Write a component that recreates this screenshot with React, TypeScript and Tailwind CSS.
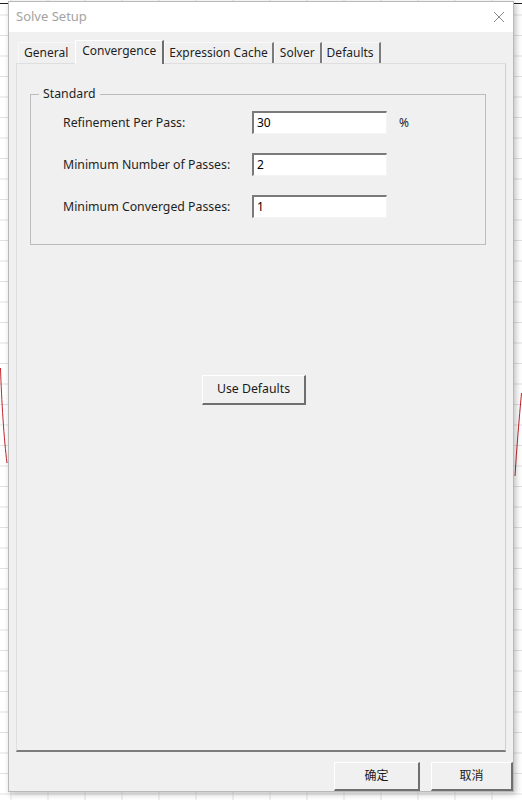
import React from 'react';

const tabs = [
  { name: 'General', pad: 'pl-[5px] pr-[7px]' },
  { name: 'Convergence', pad: 'px-[6px]' },
  { name: 'Expression Cache', pad: 'px-[4px]' },
  { name: 'Solver', pad: 'px-[5px]' },
  { name: 'Defaults', pad: 'pl-[4px] pr-[5px]' },
];

const rows = [
  { label: 'Refinement Per Pass:', value: '30', unit: '%' },
  { label: 'Minimum Number of Passes:', value: '2', unit: '' },
  { label: 'Minimum Converged Passes:', value: '1', unit: '' },
];

function Backdrop() {
  const vLines = Array.from({ length: 14 }, (_, i) => 11 + i * 37);
  const hLines = Array.from({ length: 40 }, (_, i) => 15 + i * 20.5);
  return (
    <svg className="absolute inset-0" width="522" height="800">
      {vLines.map((x) => (
        <line key={'v' + x} x1={x} y1="0" x2={x} y2="800" stroke="#e1e1e1" strokeWidth="1" />
      ))}
      {hLines.map((y) => (
        <line key={'h' + y} x1="0" y1={y} x2="522" y2={y} stroke="#e1e1e1" strokeWidth="1" />
      ))}
      <line x1="0" y1="3.5" x2="522" y2="3.5" stroke="#222" strokeWidth="1" />
      <path d="M0.5 368 C1.5 400 4 440 7 463" fill="none" stroke="#c0272d" strokeWidth="1" />
      <path d="M521.5 393 C519 420 516.5 450 515 476" fill="none" stroke="#c0272d" strokeWidth="1" />
    </svg>
  );
}

function Tabs() {
  return (
    <div className="flex items-end h-[22px] pl-[2px] text-[12px]">
      {tabs.map((t) => {
        const active = t.name === 'Convergence';
        return active ? (
          <div
            key={t.name}
            className={
              'relative z-10 -mb-[1px] h-[24px] flex items-start pt-[1px] bg-[#f0f0f0] border-t border-l border-white border-r-[2px] border-r-[#6e6e6e] ' +
              t.pad
            }
          >
            {t.name}
          </div>
        ) : (
          <div
            key={t.name}
            className={
              'h-[21px] flex items-center border-t border-l border-[#f8f8f8] border-r-[2px] border-r-[#7c7c7c] first:border-r-0 ' +
              t.pad
            }
          >
            {t.name}
          </div>
        );
      })}
    </div>
  );
}

function Field({ value }: { value: string }) {
  return (
    <div className="w-[135px] h-[23px] bg-white border-t-[2px] border-l-[2px] border-t-[#7a7a7a] border-l-[#7a7a7a] border-b border-r border-b-[#f4f4f4] border-r-[#f4f4f4] px-[3px] flex items-center text-black">
      {value}
    </div>
  );
}

function Btn({ children, className }: { children: React.ReactNode; className?: string }) {
  return (
    <button
      className={
        'flex items-center justify-center bg-[#f0f0f0] border-t border-l border-white border-b-[2px] border-r-[2px] border-b-[#6f6f6f] border-r-[#6f6f6f] text-[#1a1a1a] ' +
        (className || '')
      }
    >
      {children}
    </button>
  );
}

export default function App() {
  return (
    <div
      className="relative w-[522px] h-[800px] bg-white overflow-hidden text-[12px] text-[#1f1f1f]"
      style={{ fontFamily: '"Noto Sans", "Noto Sans CJK SC", sans-serif' }}
    >
      <Backdrop />
      <div className="absolute left-[8px] top-[1px] w-[506px] h-[791px] flex flex-col border border-[#b9b9b9] shadow-[2px_2px_6px_rgba(0,0,0,0.25)] bg-[#f0f0f0]">
        {/* title bar */}
        <div className="h-[30px] bg-white flex items-center justify-between pl-[7px] pr-[8px]">
          <span className="text-[13px] text-[#a3a3a3]">Solve Setup</span>
          <svg width="12" height="12" viewBox="0 0 12 12">
            <path d="M1 1 L11 11 M11 1 L1 11" stroke="#8a8a8a" strokeWidth="1" />
          </svg>
        </div>

        {/* body */}
        <div className="flex-1 flex flex-col px-[7px] pt-[9px]">
          <Tabs />
          <div className="flex-1 bg-[#f0f0f0] border-l border-t border-[#dedede] border-r border-r-[#cfcfcf] border-b-[2px] border-b-[#7d7d7d] pl-[13px] pr-[19px] pt-[21px] flex flex-col items-stretch">
            <fieldset className="border border-[#bcbcbc] h-[160px] px-0 pb-[10px]">
              <legend className="ml-[8px] px-[4px] text-[12.3px]">Standard</legend>
              <div className="flex flex-col gap-[19px] pt-[8px] pl-[32px]">
                {rows.map((r) => (
                  <div key={r.label} className="flex items-center">
                    <span className="w-[189px] text-[12.3px]">{r.label}</span>
                    <Field value={r.value} />
                    <span className="ml-[12px]">{r.unit}</span>
                  </div>
                ))}
              </div>
            </fieldset>
            <div className="flex justify-center pt-[130px] pr-[8px]">
              <Btn className="w-[104px] h-[30px] text-[12.3px]">Use Defaults</Btn>
            </div>
          </div>
        </div>

        {/* footer */}
        <div className="h-[39px] flex items-end justify-end gap-[11px] pr-0">
          <Btn className="w-[86px] h-[29px]">确定</Btn>
          <Btn className="w-[82px] h-[29px] border-r-0">取消</Btn>
        </div>
      </div>
    </div>
  );
}
